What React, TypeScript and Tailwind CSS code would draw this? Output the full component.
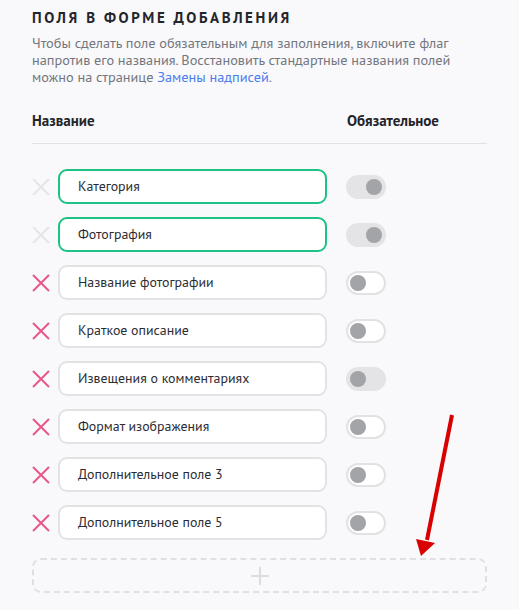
import React from "react";

type Row = { name: string; fixed: boolean; toggle: "onDisabled" | "off" | "offDisabled" };

const rows: Row[] = [
  { name: "Категория", fixed: true, toggle: "onDisabled" },
  { name: "Фотография", fixed: true, toggle: "onDisabled" },
  { name: "Название фотографии", fixed: false, toggle: "off" },
  { name: "Краткое описание", fixed: false, toggle: "off" },
  { name: "Извещения о комментариях", fixed: false, toggle: "offDisabled" },
  { name: "Формат изображения", fixed: false, toggle: "off" },
  { name: "Дополнительное поле 3", fixed: false, toggle: "off" },
  { name: "Дополнительное поле 5", fixed: false, toggle: "off" },
];

function XIcon({ color }: { color: string }) {
  return (
    <svg width="18" height="18" viewBox="0 0 18 18" className="shrink-0">
      <path d="M1 1 L17 17 M17 1 L1 17" stroke={color} strokeWidth="2" strokeLinecap="butt" />
    </svg>
  );
}

function Toggle({ kind }: { kind: Row["toggle"] }) {
  if (kind === "onDisabled") {
    return (
      <div className="flex h-[24px] w-[40px] items-center justify-end rounded-full bg-[#e4e4e7] pr-[4px]">
        <div className="h-[16px] w-[16px] rounded-full bg-[#a3a4a8]" />
      </div>
    );
  }
  if (kind === "offDisabled") {
    return (
      <div className="flex h-[24px] w-[40px] items-center rounded-full bg-[#e4e4e7] pl-[4px]">
        <div className="h-[16px] w-[16px] rounded-full bg-[#a3a4a8]" />
      </div>
    );
  }
  return (
    <div className="flex h-[24px] w-[40px] items-center rounded-full border-2 border-[#e2e2e5] bg-white pl-[2px]">
      <div className="h-[16px] w-[16px] rounded-full bg-[#a3a4a8]" />
    </div>
  );
}

export default function App() {
  return (
    <div
      className="relative min-h-[610px] w-[519px] bg-[#f9f9fb] px-[32px] pt-[8px]"
      style={{ fontFamily: '"PT Sans", "Noto Sans", sans-serif' }}
    >
      <h1 className="text-[15px] font-bold uppercase leading-[20px] tracking-[2.6px] text-[#24252a]">
        Поля в форме добавления
      </h1>
      <p className="mt-[6px] text-[14.3px] leading-[17px] text-[#74767e]">
        Чтобы сделать поле обязательным для заполнения, включите флаг напротив его названия. Восстановить
        стандартные названия полей можно на странице <span className="text-[#4a7cf0]">Замены надписей</span>.
      </p>
      <div className="mt-[26px] flex border-b border-[#e2e2e5] pb-[13px] text-[15px] font-bold leading-[19px] text-[#24252a]">
        <div className="w-[315px]">Название</div>
        <div>Обязательное</div>
      </div>
      <div className="mt-[25px] flex flex-col gap-[13px]">
        {rows.map((r) => (
          <div key={r.name} className="flex items-center">
            <XIcon color={r.fixed ? "#e6e6e9" : "#e8578a"} />
            <div
              className={
                "ml-[8px] flex h-[35px] w-[269px] items-center rounded-[9px] border-2 bg-white pl-[18px] text-[13.9px] text-[#2c2d33] " +
                (r.fixed ? "border-[#1dc285]" : "border-[#e3e3e6]")
              }
            >
              {r.name}
            </div>
            <div className="ml-[19px]">
              <Toggle kind={r.toggle} />
            </div>
          </div>
        ))}
      </div>
      <div className="mt-[18px] flex h-[35px] w-[455px] items-center justify-center rounded-[9px] border-2 border-dashed border-[#dfe0e3]">
        <svg width="18" height="18" viewBox="0 0 18 18">
          <path d="M9 0 V18 M0 9 H18" stroke="#dcdde0" strokeWidth="2" />
        </svg>
      </div>
      <svg className="pointer-events-none absolute left-0 top-0" width="519" height="610" viewBox="0 0 519 610">
        <line x1="452" y1="415" x2="427" y2="540" stroke="#d80000" strokeWidth="4" />
        <polygon points="416,539 435,543 421,556" fill="#d80000" />
      </svg>
    </div>
  );
}
